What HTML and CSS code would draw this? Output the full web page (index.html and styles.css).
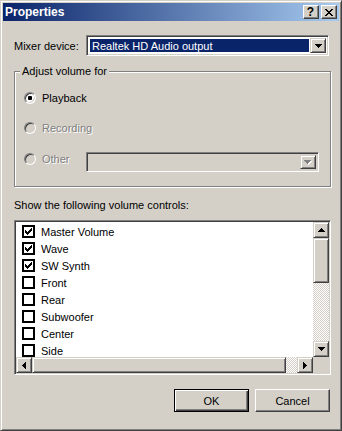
FILE: index.html
```html
<!DOCTYPE html>
<html>
<head>
<meta charset="utf-8">
<link rel="stylesheet" href="styles.css">
</head>
<body>
<div class="window">
  <div class="titlebar">
    <span class="title">Properties</span>
    <div class="caption-btns">
      <div class="cap-btn help">?</div>
      <div class="cap-btn"><svg width="8" height="7" viewBox="0 0 8 7" shape-rendering="crispEdges"><path fill="#000" d="M0 0h2v1H0z M6 0h2v1H6z M1 1h2v1H1z M5 1h2v1H5z M2 2h4v1H2z M3 3h2v1H3z M2 4h4v1H2z M1 5h2v1H1z M5 5h2v1H5z M0 6h2v1H0z M6 6h2v1H6z"/></svg></div>
    </div>
  </div>
  <div class="body">
    <div class="mixer-row">
      <span class="lbl">Mixer device:</span>
      <div class="combo">
        <div class="combo-field"><span class="sel">Realtek HD Audio output</span></div>
        <div class="drop-btn"><svg width="7" height="4" viewBox="0 0 7 4" shape-rendering="crispEdges"><path fill="#000" d="M0 0h7v1H0z M1 1h5v1H1z M2 2h3v1H2z M3 3h1v1H3z"/></svg></div>
      </div>
    </div>

    <div class="group">
      <span class="legend">Adjust volume for</span>
      <div class="opt first"><span class="radio checked"><span class="dot"></span></span><span>Playback</span></div>
      <div class="opt second disabled"><span class="radio"></span><span>Recording</span></div>
      <div class="opt-row">
        <div class="opt disabled other"><span class="radio"></span><span>Other</span></div>
        <div class="combo small disabled">
          <div class="combo-field"></div>
          <div class="drop-btn"><svg width="8" height="5" viewBox="0 0 8 5" shape-rendering="crispEdges"><path fill="#fff" d="M1 1h7v1H1z M2 2h5v1H2z M3 3h3v1H3z M4 4h1v1H4z"/><path fill="#808080" d="M0 0h7v1H0z M1 1h5v1H1z M2 2h3v1H2z M3 3h1v1H3z"/></svg></div>
        </div>
      </div>
    </div>

    <div class="list-label">Show the following volume controls:</div>

    <div class="listbox">
      <div class="items">
        <div class="item"><span class="check on"><svg width="7" height="7" viewBox="0 0 7 7" shape-rendering="crispEdges"><path fill="#000" d="M6 0h1v1H6z M5 1h2v1H5z M0 2h1v1H0z M4 2h3v1H4z M0 3h2v1H0z M3 3h3v1H3z M0 4h5v1H0z M1 5h3v1H1z M2 6h1v1H2z"/></svg></span><span>Master Volume</span></div>
        <div class="item"><span class="check on"><svg width="7" height="7" viewBox="0 0 7 7" shape-rendering="crispEdges"><path fill="#000" d="M6 0h1v1H6z M5 1h2v1H5z M0 2h1v1H0z M4 2h3v1H4z M0 3h2v1H0z M3 3h3v1H3z M0 4h5v1H0z M1 5h3v1H1z M2 6h1v1H2z"/></svg></span><span>Wave</span></div>
        <div class="item"><span class="check on"><svg width="7" height="7" viewBox="0 0 7 7" shape-rendering="crispEdges"><path fill="#000" d="M6 0h1v1H6z M5 1h2v1H5z M0 2h1v1H0z M4 2h3v1H4z M0 3h2v1H0z M3 3h3v1H3z M0 4h5v1H0z M1 5h3v1H1z M2 6h1v1H2z"/></svg></span><span>SW Synth</span></div>
        <div class="item"><span class="check"></span><span>Front</span></div>
        <div class="item"><span class="check"></span><span>Rear</span></div>
        <div class="item"><span class="check"></span><span>Subwoofer</span></div>
        <div class="item"><span class="check"></span><span>Center</span></div>
        <div class="item"><span class="check"></span><span>Side</span></div>
      </div>
      <div class="vscroll">
        <div class="sb-btn"><svg width="7" height="4" viewBox="0 0 7 4" shape-rendering="crispEdges"><path fill="#000" d="M3 0h1v1H3z M2 1h3v1H2z M1 2h5v1H1z M0 3h7v1H0z"/></svg></div>
        <div class="sb-thumb v"></div>
        <div class="sb-track"></div>
        <div class="sb-btn"><svg width="7" height="4" viewBox="0 0 7 4" shape-rendering="crispEdges"><path fill="#000" d="M0 0h7v1H0z M1 1h5v1H1z M2 2h3v1H2z M3 3h1v1H3z"/></svg></div>
      </div>
      <div class="hscroll">
        <div class="sb-btn"><svg width="4" height="7" viewBox="0 0 4 7" shape-rendering="crispEdges"><path fill="#000" d="M3 0h1v7H3z M2 1h1v5H2z M1 2h1v3H1z M0 3h1v1H0z"/></svg></div>
        <div class="sb-thumb h"></div>
        <div class="sb-track"></div>
        <div class="sb-btn"><svg width="4" height="7" viewBox="0 0 4 7" shape-rendering="crispEdges"><path fill="#000" d="M0 0h1v7H0z M1 1h1v5H1z M2 2h1v3H2z M3 3h1v1H3z"/></svg></div>
      </div>
      <div class="corner"></div>
    </div>

    <div class="buttons">
      <div class="btn default">OK</div>
      <div class="btn">Cancel</div>
    </div>
  </div>
</div>
</body>
</html>
```

FILE: styles.css
```css
* { box-sizing: border-box; }
html, body { margin: 0; padding: 0; }
body {
  background: #d4d0c8;
  font-family: "Liberation Sans", Arial, sans-serif;
  font-size: 11px;
  color: #000;
}

.window {
  width: 342px;
  height: 431px;
  border: 1px solid;
  border-color: #d4d0c8 #404040 #404040 #d4d0c8;
  box-shadow: inset 1px 1px #fff, inset -1px -1px #808080;
  padding: 2px;
  display: flex;
  flex-direction: column;
  background: #d4d0c8;
}

.titlebar {
  height: 18px;
  flex: none;
  display: flex;
  align-items: center;
  justify-content: space-between;
  padding: 0 2px;
  background: linear-gradient(to right, #0a246a, #a6caf0);
  color: #fff;
  font-weight: bold;
}
.title { line-height: 14px; font-size: 12px; }

.caption-btns { display: flex; gap: 2px; }
.cap-btn {
  width: 16px;
  height: 14px;
  background: #d4d0c8;
  border: 1px solid;
  border-color: #fff #404040 #404040 #fff;
  box-shadow: inset -1px -1px #808080;
  display: flex;
  align-items: center;
  justify-content: center;
  color: #000;
}
.cap-btn svg { display: block; margin-left: -1px; }
.cap-btn.help { font-size: 12px; font-weight: bold; line-height: 10px; padding-right: 1px; }

.body {
  display: flex;
  flex-direction: column;
  padding-left: 11px;
  width: 328px;
}

.mixer-row {
  margin-top: 14px;
  height: 21px;
  display: flex;
  align-items: center;
  width: 317px;
}
.lbl { width: 72px; flex: none; }

.combo {
  width: 243px;
  height: 21px;
  border: 1px solid;
  border-color: #808080 #fff #fff #808080;
  box-shadow: inset 1px 1px #404040, inset -1px -1px #d4d0c8;
  background: #fff;
  display: flex;
  padding: 2px;
}
.combo-field { flex: 1; padding: 1px; display: flex; }
.sel {
  flex: 1;
  background: #0a246a;
  color: #fff;
  padding-left: 2px;
  line-height: 15px;
}
.drop-btn {
  width: 16px;
  height: 100%;
  background: #d4d0c8;
  border: 1px solid;
  border-color: #d4d0c8 #404040 #404040 #d4d0c8;
  box-shadow: inset 1px 1px #fff, inset -1px -1px #808080;
  display: flex;
  align-items: center;
  justify-content: center;
}
.drop-btn svg { display: block; margin-top: 1px; }
.combo.small { width: 233px; height: 20px; margin-top: 1px; }
.combo.disabled { background: #d4d0c8; }

.group {
  position: relative;
  margin-top: 15px;
  width: 317px;
  border: 1px solid #808080;
  box-shadow: inset 1px 1px #fff, 1px 1px #fff;
  padding: 18px 0 14px 9px;
}
.legend {
  position: absolute;
  top: -7px;
  left: 5px;
  padding: 0 2px;
  line-height: 13px;
  background: #d4d0c8;
}

.opt {
  display: flex;
  align-items: center;
  height: 16px;
}
.opt.second { margin-top: 14px; }
.opt-row { display: flex; align-items: flex-start; margin-top: 15px; height: 21px; }
.opt.other { width: 62px; flex: none; }
.disabled { color: #808080; text-shadow: 1px 1px 0 #fff; }

.radio {
  width: 12px;
  height: 12px;
  flex: none;
  margin-right: 6px;
  border-radius: 50%;
  border: 1px solid;
  border-color: #808080 #fff #fff #808080;
  box-shadow: inset 1px 1px #404040, inset -1px -1px #d4d0c8;
  background: #fff;
  display: flex;
  align-items: center;
  justify-content: center;
}
.opt.disabled .radio { background: #d4d0c8; }
.dot { width: 4px; height: 4px; background: #000; border-radius: 1px; }

.list-label { margin-top: 12px; line-height: 13px; }

.listbox {
  margin-top: 8px;
  width: 317px;
  height: 155px;
  border: 1px solid;
  border-color: #808080 #fff #fff #808080;
  box-shadow: inset 1px 1px #404040, inset -1px -1px #d4d0c8;
  background: #fff;
  padding: 1px;
  display: grid;
  grid-template-columns: 1fr 16px;
  grid-template-rows: 1fr 16px;
}
.items { overflow: hidden; padding-top: 1px; }
.item {
  height: 17px;
  display: flex;
  align-items: center;
  padding-left: 6px;
}
.check {
  width: 13px;
  height: 13px;
  flex: none;
  margin-right: 6px;
  border: 2px solid #000;
  background: #fff;
  display: flex;
  padding: 1px;
}
.check svg { display: block; }

.vscroll { display: flex; flex-direction: column; }
.hscroll { display: flex; }
.sb-btn {
  width: 16px;
  height: 16px;
  flex: none;
  background: #d4d0c8;
  border: 1px solid;
  border-color: #d4d0c8 #404040 #404040 #d4d0c8;
  box-shadow: inset 1px 1px #fff, inset -1px -1px #808080;
  display: flex;
  align-items: center;
  justify-content: center;
}
.sb-thumb {
  flex: none;
  background: #d4d0c8;
  border: 1px solid;
  border-color: #d4d0c8 #404040 #404040 #d4d0c8;
  box-shadow: inset 1px 1px #fff, inset -1px -1px #808080;
}
.sb-thumb.v { height: 45px; }
.sb-thumb.h { width: 254px; }
.sb-track {
  flex: 1;
  background: repeating-conic-gradient(#fff 0 25%, #d4d0c8 0 50%) 0 0 / 2px 2px;
}
.corner { background: #d4d0c8; }

.buttons {
  margin-top: 14px;
  width: 316px;
  display: flex;
  justify-content: flex-end;
  gap: 6px;
}
.btn {
  width: 75px;
  height: 23px;
  border: 1px solid;
  border-color: #fff #404040 #404040 #fff;
  box-shadow: inset -1px -1px #808080;
  background: #d4d0c8;
  display: flex;
  align-items: center;
  justify-content: center;
}
.btn.default {
  border: 1px solid #000;
  box-shadow: inset 1px 1px #fff, inset -1px -1px #404040, inset -2px -2px #808080;
}
```
